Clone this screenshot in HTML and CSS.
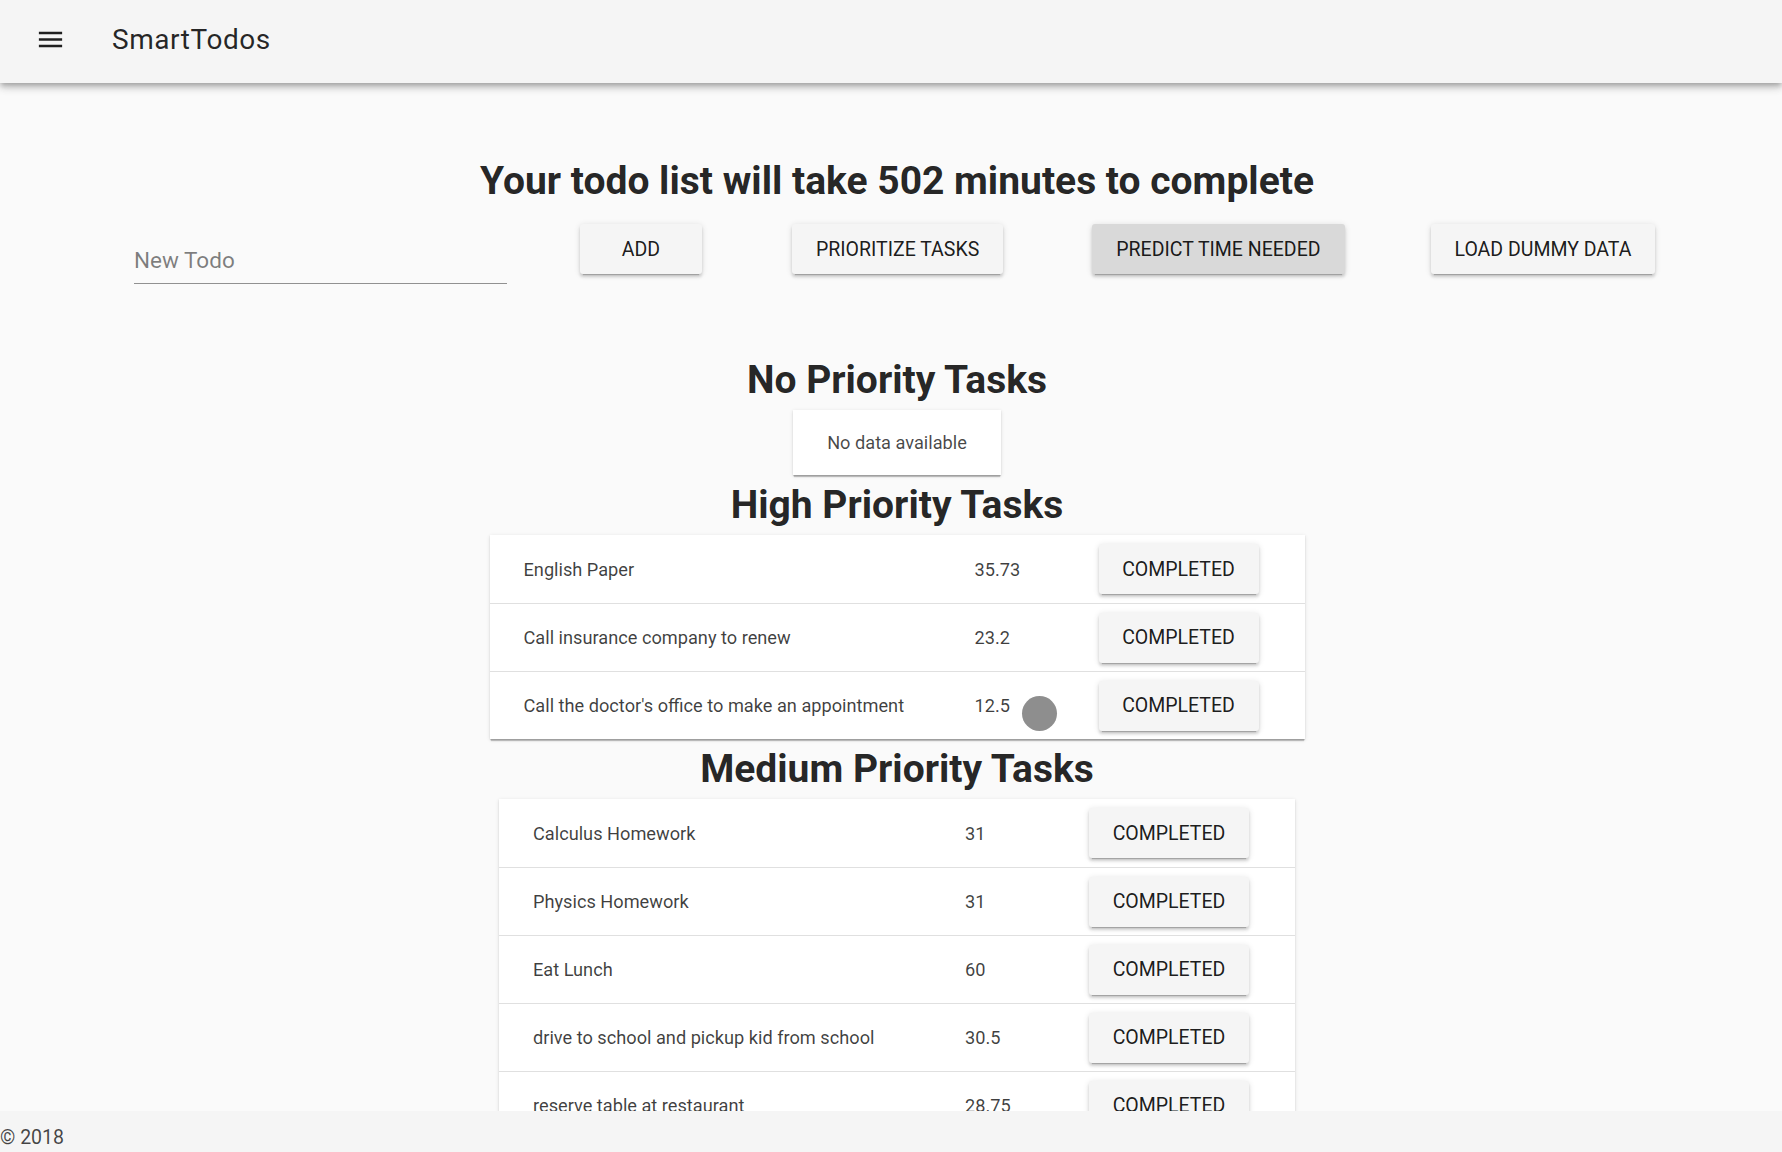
FILE: index.html
```html
<!DOCTYPE html>
<html lang="en">
<head>
<meta charset="utf-8">
<title>SmartTodos</title>
<link rel="stylesheet" href="styles.css">
</head>
<body>
<div class="app">
  <header class="toolbar">
    <span class="menu-btn">
      <svg viewBox="0 0 24 24" width="31" height="31" aria-hidden="true"><path d="M3 18h18v-2H3v2zm0-5h18v-2H3v2zm0-7v2h18V6H3z"/></svg>
    </span>
    <div class="toolbar-title">SmartTodos</div>
  </header>
  <main class="main">
    <h1 class="headline">Your todo list will take 502 minutes to complete</h1>
    <div class="controls">
      <div class="field"><input type="text" placeholder="New Todo"></div>
      <button class="btn btn-add">Add</button>
      <button class="btn btn-prioritize">Prioritize Tasks</button>
      <button class="btn btn-predict">Predict Time Needed</button>
      <button class="btn btn-load">Load Dummy Data</button>
    </div>
    <section class="tasks">
      <h2 class="section-title">No Priority Tasks</h2>
      <div class="nodata">No data available</div>

      <h2 class="section-title">High Priority Tasks</h2>
      <div class="task-table high">
        <div class="row"><span class="name">English Paper</span><span class="num">35.73</span><span class="action"><button class="btn btn-done">Completed</button></span></div>
        <div class="row"><span class="name">Call insurance company to renew</span><span class="num">23.2</span><span class="action"><button class="btn btn-done">Completed</button></span></div>
        <div class="row"><span class="name">Call the doctor's office to make an appointment</span><span class="num">12.5</span><span class="action"><button class="btn btn-done">Completed</button></span></div>
      </div>

      <h2 class="section-title">Medium Priority Tasks</h2>
      <div class="task-table medium">
        <div class="row"><span class="name">Calculus Homework</span><span class="num">31</span><span class="action"><button class="btn btn-done">Completed</button></span></div>
        <div class="row"><span class="name">Physics Homework</span><span class="num">31</span><span class="action"><button class="btn btn-done">Completed</button></span></div>
        <div class="row"><span class="name">Eat Lunch</span><span class="num">60</span><span class="action"><button class="btn btn-done">Completed</button></span></div>
        <div class="row"><span class="name">drive to school and pickup kid from school</span><span class="num">30.5</span><span class="action"><button class="btn btn-done">Completed</button></span></div>
        <div class="row"><span class="name">reserve table at restaurant</span><span class="num">28.75</span><span class="action"><button class="btn btn-done">Completed</button></span></div>
      </div>
    </section>
  </main>
  <footer class="footer">© 2018</footer>
</div>
<div class="cursor-dot"></div>
</body>
</html>
```

FILE: styles.css
```css
* { box-sizing: border-box; }

html, body {
  margin: 0;
  padding: 0;
  height: 100%;
}

body {
  font-family: Roboto, "Liberation Sans", Arial, sans-serif;
  color: rgba(0, 0, 0, 0.87);
  background: #fafafa;
  overflow: hidden;
}

.app {
  height: 100vh;
  display: flex;
  flex-direction: column;
  background: #fafafa;
}

/* Toolbar */
.toolbar {
  flex: none;
  height: 83px;
  padding-bottom: 5px;
  display: flex;
  align-items: center;
  background: #f5f5f5;
  position: relative;
  z-index: 2;
  box-shadow: 0 3px 5px -1px rgba(0,0,0,0.2), 0 5px 7px 0 rgba(0,0,0,0.14), 0 1px 13px 0 rgba(0,0,0,0.12);
}

.menu-btn {
  margin-left: 35px;
  width: 31px;
  height: 31px;
  display: flex;
}

.menu-btn svg { fill: rgba(0, 0, 0, 0.87); }

.toolbar-title {
  margin-left: 46px;
  font-size: 28px;
  font-weight: 400;
  letter-spacing: 0.02em;
  color: rgba(0, 0, 0, 0.85);
}

/* Main */
.main {
  flex: 1;
  overflow: hidden;
  padding-top: 74px;
}

.headline {
  margin: 0;
  padding-left: 12px;
  text-align: center;
  font-size: 39px;
  line-height: 48px;
  font-weight: 700;
  color: rgba(0, 0, 0, 0.87);
}

.controls {
  margin-top: 19px;
  padding-left: 134px;
  display: flex;
  align-items: flex-start;
  height: 60px;
}

.field {
  width: 373px;
  height: 60px;
  display: flex;
  align-items: flex-end;
  border-bottom: 1px solid rgba(0, 0, 0, 0.42);
}

.field input {
  width: 100%;
  height: 40px;
  border: none;
  outline: none;
  background: transparent;
  padding: 0 0 7px;
  font-family: inherit;
  font-size: 22.5px;
  line-height: 32px;
  color: rgba(0, 0, 0, 0.87);
}

.field input::placeholder { color: rgba(0, 0, 0, 0.5); }

.btn {
  height: 50px;
  padding: 0 24px;
  border: none;
  border-radius: 3px;
  background: #f5f5f5;
  font-family: inherit;
  font-size: 19.5px;
  font-weight: 400;
  text-transform: uppercase;
  color: rgba(0, 0, 0, 0.9);
  box-shadow: 0 4px 1px -3px rgba(0,0,0,0.2), 0 3px 3px 0 rgba(0,0,0,0.14), 0 1px 6px 0 rgba(0,0,0,0.12);
  white-space: nowrap;
}

.btn-add { margin-left: 73px; min-width: 122px; }
.btn-prioritize { margin-left: 90px; }
.btn-predict { margin-left: 89px; background: #d9d9d9; }
.btn-load { margin-left: 86px; }

/* Task sections */
.tasks {
  margin-top: 66px;
  padding-left: 12px;
  display: flex;
  flex-direction: column;
  align-items: center;
}

.section-title {
  margin: 0;
  height: 60px;
  line-height: 60px;
  font-size: 39px;
  font-weight: 700;
  color: rgba(0, 0, 0, 0.87);
}

.nodata {
  width: 208px;
  height: 65px;
  background: #fff;
  display: flex;
  align-items: center;
  justify-content: center;
  font-size: 18.2px;
  color: rgba(0, 0, 0, 0.72);
  box-shadow: 0 3px 1px -1px rgba(0,0,0,0.2), 0 1px 1px 0 rgba(0,0,0,0.14), 0 1px 4px 0 rgba(0,0,0,0.12);
}

.task-table {
  background: #fff;
  box-shadow: 0 3px 1px -1px rgba(0,0,0,0.2), 0 1px 1px 0 rgba(0,0,0,0.14), 0 1px 4px 0 rgba(0,0,0,0.12);
}

.task-table.high { width: 815px; }
.task-table.medium { width: 796px; }

.row {
  height: 68px;
  display: grid;
  align-items: center;
  font-size: 18.2px;
  color: rgba(0, 0, 0, 0.75);
}

.high .row { grid-template-columns: 485px 124px 206px; }
.medium .row { grid-template-columns: 466px 124px 206px; }

.row + .row { border-top: 1px solid rgba(0, 0, 0, 0.12); }

.name { padding-left: 34px; white-space: nowrap; }

.action { display: flex; }

.btn-done { width: 160px; padding: 0; }

/* Footer */
.footer {
  flex: none;
  height: 41px;
  padding-top: 12px;
  line-height: 30px;
  background: #f5f5f5;
  font-size: 19.5px;
  color: rgba(0, 0, 0, 0.72);
  position: relative;
  z-index: 2;
}

/* Screen-recorder cursor marker */
.cursor-dot {
  position: absolute;
  left: 1022px;
  top: 696px;
  width: 35px;
  height: 35px;
  border-radius: 50%;
  background: #8e8e8e;
  z-index: 5;
}
```
